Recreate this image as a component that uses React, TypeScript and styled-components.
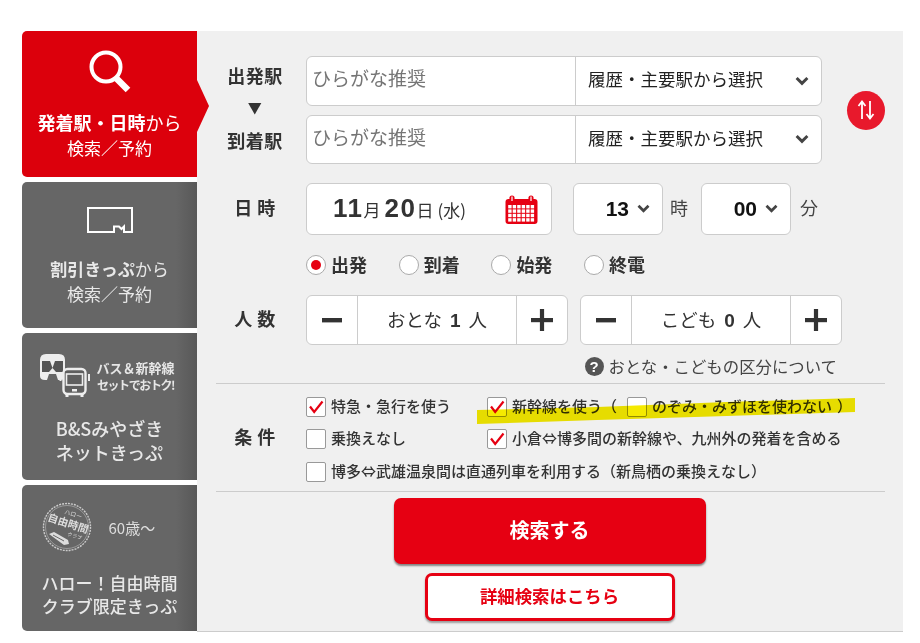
import React from 'react';
import styled, { createGlobalStyle } from 'styled-components';

const GlobalStyle = createGlobalStyle`
  html, body {
    margin: 0;
    padding: 0;
    background: #fff;
    font-family: "Noto Sans CJK JP", "Liberation Sans", sans-serif;
    color: #333;
  }
`;

const Page = styled.div`
  display: flex;
  width: 920px;
  height: 643px;
  box-sizing: border-box;
  padding: 31px 0 0 22px;
  overflow: hidden;
`;

const Sidebar = styled.nav`
  display: flex;
  flex-direction: column;
  gap: 5px;
  width: 175px;
  height: 600px;
  overflow: hidden;
`;

const Tab = styled.a<{ $active?: boolean; $top: number; $gap: number; $height: number; $line?: number }>`
  position: relative;
  display: flex;
  flex-direction: column;
  align-items: center;
  box-sizing: border-box;
  flex: none;
  height: ${p => p.$height}px;
  padding-top: ${p => p.$top}px;
  gap: ${p => p.$gap}px;
  border-radius: 5px 0 0 5px;
  color: #fff;
  background: ${p => (p.$active ? '#dc000c' : 'linear-gradient(to right, #666 88%, #585858)')};
  font-size: 17px;
  line-height: ${p => p.$line ?? 25}px;
  text-align: center;
`;

const TabText = styled.div<{ $muted?: boolean; $size?: number; $weight?: number }>`
  color: ${p => (p.$muted ? '#e8e8e8' : '#fff')};
  font-size: ${p => p.$size ?? 17}px;
  font-weight: ${p => p.$weight ?? 400};
  white-space: nowrap;

  b {
    font-weight: 700;
  }
`;

const ActiveColumn = styled.div`
  position: relative;
`;

const TabArrow = styled.div`
  position: absolute;
  left: 175px;
  top: 49px;
  width: 12px;
  height: 52px;
  background: #dc000c;
  clip-path: polygon(0 0, 100% 50%, 0 100%);
`;

const PromoRow = styled.div<{ $inset?: number }>`
  display: flex;
  align-items: center;
  box-sizing: border-box;
  width: 140px;
  padding-left: ${p => p.$inset ?? 0}px;
`;

const PromoText = styled.div`
  display: flex;
  flex-direction: column;
  align-items: center;
  margin-left: 5px;
  font-size: 13px;
  line-height: 17px;
  font-weight: 700;
  white-space: nowrap;
  color: #e6e6e6;
`;

const PromoLine = styled.span<{ $tight?: boolean }>`
  font-size: ${p => (p.$tight ? 12 : 13)}px;
  letter-spacing: ${p => (p.$tight ? -1.4 : 0)}px;
`;

const SeniorText = styled.div`
  margin-left: 17px;
  font-size: 15px;
  color: #ddd;
`;

const Panel = styled.main`
  box-sizing: border-box;
  width: 706px;
  height: 601px;
  padding: 25px 18px 10px 19px;
  background: #f0f0f0;
  border-bottom: 1px solid #ccc;
`;

const Row = styled.div<{ $top?: number }>`
  display: flex;
  align-items: center;
  margin-top: ${p => p.$top ?? 0}px;
`;

const RowLabel = styled.div`
  flex: none;
  box-sizing: border-box;
  width: 78px;
  margin-right: 12px;
  padding-bottom: 4px;
  font-size: 18px;
  font-weight: 700;
  text-align: center;
  letter-spacing: 0.5px;
  color: #333;
`;

const StationLabels = styled(RowLabel)`
  display: flex;
  flex-direction: column;
  align-items: center;
  padding-bottom: 6px;
  line-height: 28px;
`;

const StationArrow = styled.span`
  font-size: 14px;
  line-height: 37px;
  color: #333;
`;

const StationFields = styled.div`
  display: flex;
  flex-direction: column;
  gap: 9px;
  width: 516px;
`;

const Field = styled.div`
  display: flex;
  align-items: center;
  box-sizing: border-box;
  background: #fff;
  border: 1px solid #ccc;
  border-radius: 6px;
`;

const StationField = styled(Field)`
  height: 49.5px;
`;

const StationInput = styled.input`
  box-sizing: border-box;
  width: 269px;
  height: 100%;
  padding: 0 7px 6px 5px;
  border: 0;
  border-right: 1px solid #ccc;
  border-radius: 6px 0 0 6px;
  background: none;
  font: 400 19px "Noto Sans CJK JP", sans-serif;
  outline: none;

  ::placeholder {
    color: #8a8a8a;
    opacity: 1;
  }
`;

const StationSelect = styled.div`
  display: flex;
  flex: 1;
  align-items: center;
  justify-content: space-between;
  padding: 0 12px;
  font-size: 17.5px;
  color: #222;
  white-space: nowrap;
`;

const SelectText = styled.span`
  padding-bottom: 4px;
`;

const SwapButton = styled.button`
  display: flex;
  align-items: center;
  justify-content: center;
  flex: none;
  width: 38px;
  height: 39px;
  margin-left: 25px;
  padding: 0;
  border: 0;
  border-radius: 50%;
  background: #e8192c;
`;

const DateField = styled(Field)`
  justify-content: space-between;
  width: 246px;
  height: 52px;
  padding: 0 13px 0 26px;
  font-size: 17px;
  white-space: nowrap;
`;

const DateText = styled.span`
  padding-bottom: 2px;
`;

const DateNumber = styled.b`
  font-family: "Liberation Sans", sans-serif;
  font-size: 26px;
  font-weight: 700;
  letter-spacing: 1.5px;
`;

const Gap = styled.span`
  margin: 0 2px;
`;

const TimeField = styled(Field)<{ $left: number }>`
  justify-content: flex-end;
  gap: 8px;
  width: 90px;
  height: 52px;
  margin-left: ${p => p.$left}px;
  padding-right: 12px;
  font-family: "Liberation Sans", sans-serif;
  font-size: 21px;
  font-weight: 700;
  color: #111;
`;

const TimeUnit = styled.span<{ $left: number }>`
  margin-left: ${p => p.$left}px;
  padding-bottom: 4px;
  font-size: 18px;
  color: #444;
`;

const RadioGroup = styled.div`
  display: flex;
  margin: 20px 0 0 90px;
  height: 20px;
`;

const RadioItem = styled.label`
  display: flex;
  align-items: center;
  gap: 5px;
  box-sizing: border-box;
  width: 92.7px;
  height: 20px;
  padding-bottom: 2px;
  font-size: 18px;
  font-weight: 700;
  color: #333;
`;

const RadioCircle = styled.span<{ $on?: boolean }>`
  display: flex;
  align-items: center;
  justify-content: center;
  box-sizing: border-box;
  width: 20px;
  height: 20px;
  margin-bottom: -2px;
  border: 1px solid #aaa;
  border-radius: 50%;
  background: #fff;

  &::after {
    content: '';
    display: ${p => (p.$on ? 'block' : 'none')};
    width: 10px;
    height: 10px;
    border-radius: 50%;
    background: #e60012;
  }
`;

const Stepper = styled(Field)<{ $left?: number }>`
  width: 262px;
  height: 50px;
  margin-left: ${p => p.$left ?? 0}px;
`;

const StepButton = styled.div<{ $side: 'left' | 'right' }>`
  display: flex;
  align-items: center;
  justify-content: center;
  flex: none;
  width: 50px;
  height: 100%;
  border-${p => (p.$side === 'left' ? 'right' : 'left')}: 1px solid #ccc;
`;

const StepValue = styled.div`
  flex: 1;
  padding-bottom: 3px;
  font-size: 18.5px;
  text-align: center;
  white-space: nowrap;

  b {
    margin: 0 8px;
    font-family: "Liberation Sans", sans-serif;
    font-size: 19px;
    font-weight: 700;
  }
`;

const HelpRow = styled.div`
  display: flex;
  align-items: center;
  justify-content: flex-end;
  gap: 5px;
  height: 20px;
  margin: 11px 48px 0 0;
  font-size: 16.4px;
  color: #444;
  white-space: nowrap;
`;

const HelpIcon = styled.span`
  display: flex;
  align-items: center;
  justify-content: center;
  width: 19px;
  height: 19px;
  border-radius: 50%;
  background: #555;
  color: #fff;
  font-family: "Liberation Sans", sans-serif;
  font-size: 15px;
  font-weight: 700;
`;

const Conditions = styled.section`
  position: relative;
  display: flex;
  align-items: center;
  height: 107px;
  margin-top: 7px;
  border-top: 1px solid #ccc;
  border-bottom: 1px solid #ccc;
`;

const CheckGrid = styled.div`
  display: grid;
  grid-template-columns: 181px auto;
  row-gap: 12.5px;
  margin-top: 3px;
`;

const CheckItem = styled.label<{ $wide?: boolean }>`
  position: relative;
  z-index: 0;
  display: flex;
  align-items: center;
  gap: 5px;
  box-sizing: border-box;
  grid-column: ${p => (p.$wide ? '1 / span 2' : 'auto')};
  height: 20px;
  padding-bottom: 3px;
  font-size: 15px;
  font-weight: 500;
  color: #333;
  white-space: nowrap;
`;

const Paren = styled.span`
  margin: 0 -2px 0 0;
`;

const Box = styled.span<{ $left?: number }>`
  display: flex;
  align-items: center;
  justify-content: center;
  flex: none;
  box-sizing: border-box;
  width: 20px;
  height: 20px;
  margin: 0 0 -3px ${p => p.$left ?? 0}px;
  border: 1px solid #999;
  border-radius: 2px;
  background: #fff;
`;

const Highlight = styled.svg`
  position: absolute;
  left: 261px;
  top: 14px;
  mix-blend-mode: multiply;
  pointer-events: none;
  z-index: 1;
`;

const Actions = styled.div`
  display: flex;
  flex-direction: column;
  align-items: center;
  padding-right: 2px;
`;

const SearchButton = styled.button`
  width: 312px;
  height: 66px;
  margin-top: 6px;
  padding: 0 0 4px;
  border: 0;
  border-radius: 7px;
  background: #e60012;
  box-shadow: 0 2px 2px rgba(0, 0, 0, 0.45);
  color: #fff;
  font: 700 20px "Noto Sans CJK JP", sans-serif;
`;

const DetailButton = styled.button`
  box-sizing: border-box;
  width: 250px;
  height: 48px;
  margin-top: 9px;
  padding: 0 0 4px;
  border: 3px solid #e60012;
  border-radius: 7px;
  background: #fff;
  box-shadow: 0 2px 2px rgba(0, 0, 0, 0.35);
  color: #e60012;
  font: 700 17.4px "Noto Sans CJK JP", sans-serif;
`;

const Chevron = ({ size = 14 }: { size?: number }) => (
  <svg width={size} height={size * 0.7} viewBox="0 0 14 10" fill="none">
    <path d="M1.5 2 7 7.5 12.5 2" stroke="#444" strokeWidth="3" />
  </svg>
);

const Minus = () => (
  <svg width="22" height="22" viewBox="0 0 22 22">
    <rect x="1" y="9" width="20" height="4.4" fill="#333" />
  </svg>
);

const Plus = () => (
  <svg width="22" height="22" viewBox="0 0 22 22">
    <rect x="0" y="9" width="22" height="4.2" fill="#333" />
    <rect x="8.9" y="0" width="4.2" height="22" fill="#333" />
  </svg>
);

const Check = () => (
  <svg width="16" height="14" viewBox="0 0 16 14" fill="none">
    <path d="M2 6.5 6.2 12 14.5 1.5" stroke="#e60012" strokeWidth="2.2" />
  </svg>
);

const Calendar = () => (
  <svg width="33" height="29" viewBox="0 0 33 29">
    <rect x="0.5" y="4" width="32" height="25" rx="3" fill="#e60012" />
    {[0, 1, 2, 3].map(r =>
      [0, 1, 2, 3, 4, 5].map(c => (
        <rect key={`${r}-${c}`} x={3.2 + c * 4.5} y={10 + r * 4.4} width="3.4" height="3.4" fill="#fff" />
      )),
    )}
    <circle cx="7" cy="3" r="2.6" fill="#e60012" />
    <circle cx="26" cy="3" r="2.6" fill="#e60012" />
    <path d="M7 6V1.5M26 6V1.5" stroke="#fff" strokeWidth="1.2" />
  </svg>
);

const SwapIcon = () => (
  <svg width="18" height="22" viewBox="0 0 18 22" fill="none" stroke="#fff" strokeWidth="1.8">
    <path d="M5 20V2.5M1.5 7 5 2.5 8.5 7" />
    <path d="M13 2V19.5M9.5 15 13 19.5 16.5 15" />
  </svg>
);

const SearchIcon = () => (
  <svg width="42" height="43" viewBox="0 0 42 43" fill="none" stroke="#fff">
    <circle cx="17" cy="17" r="14.5" strokeWidth="4" />
    <path d="M27 28 39 40" strokeWidth="6.5" />
  </svg>
);

const TicketIcon = () => (
  <svg width="46" height="26" viewBox="0 0 46 26" fill="none" stroke="#fff" strokeWidth="2">
    <path d="M1 1H45V25H37V19.5L34.5 22 32 19.5H27V25H1Z" />
  </svg>
);

const TrainBusIcon = () => (
  <svg width="52" height="44" viewBox="0 0 52 44">
    <path d="M0 6Q0 0 6 0H19Q25 0 25 6V22Q25 26 20 26H5Q0 26 0 22Z" fill="#eee" />
    <path d="M2 7H10L12.5 14 9 18H2ZM23 7H15L12.5 14 16 18H23Z" fill="#555" />
    <path d="M7 26 9 20H16L18 26Z" fill="#666" />
    <rect x="23.5" y="15" width="22" height="25" rx="4" fill="#5f5f5f" stroke="#eee" strokeWidth="2.4" />
    <rect x="26.5" y="20" width="16" height="11" fill="none" stroke="#eee" strokeWidth="1.6" />
    <rect x="32" y="35" width="5" height="2.5" fill="#eee" />
    <path d="M27 39v4M42 39v4" stroke="#eee" strokeWidth="3" />
    <path d="M20.5 20v7M49 20v7" stroke="#eee" strokeWidth="2" />
  </svg>
);

const StampIcon = () => (
  <svg width="50" height="50" viewBox="0 0 50 50">
    <circle cx="25" cy="25" r="23.5" fill="none" stroke="#ccc" strokeWidth="1.4" strokeDasharray="2 1" />
    <circle cx="25" cy="25" r="21.5" fill="none" stroke="#bbb" strokeWidth="0.6" />
    <g transform="rotate(18 25 25)" fill="#ddd" fontFamily="Noto Sans CJK JP, sans-serif" textAnchor="middle">
      <text x="27" y="13" fontSize="6">ハロー</text>
      <text x="25" y="25" fontSize="10.5" fontWeight="700">自由時間</text>
      <text x="35" y="33" fontSize="5">クラブ</text>
    </g>
    <path d="M7 32 12 30 26 38 27 42 22 43Z" fill="#ddd" />
    <path d="M11 33 22 39" stroke="#666" strokeWidth="1" />
  </svg>
);

const App: React.FC = () => {
  return (
    <>
      <GlobalStyle />
      <Page>
        <ActiveColumn>
          <Sidebar>
            <Tab $active $height={146} $top={19} $gap={17}>
              <SearchIcon />
              <TabText>
                <TabText as="span" $size={18}>
                  <b>発着駅・日時</b>から
                </TabText>
                <br />
                検索／予約
              </TabText>
            </Tab>
            <Tab $height={146} $top={25} $gap={23}>
              <TicketIcon />
              <TabText $muted>
                <b>割引きっぷ</b>から
                <br />
                検索／予約
              </TabText>
            </Tab>
            <Tab $height={147} $top={21} $gap={18} $line={24}>
              <PromoRow>
                <TrainBusIcon />
                <PromoText>
                  <PromoLine>バス＆新幹線</PromoLine>
                  <PromoLine $tight>セットでおトク!</PromoLine>
                </PromoText>
              </PromoRow>
              <TabText $muted $size={18} $weight={500}>
                B&amp;Sみやざき
                <br />
                ネットきっぷ
              </TabText>
            </Tab>
            <Tab $height={146} $top={17} $gap={19} $line={23}>
              <PromoRow $inset={2}>
                <StampIcon />
                <SeniorText>60歳〜</SeniorText>
              </PromoRow>
              <TabText $muted $weight={500}>
                ハロー！自由時間
                <br />
                クラブ限定きっぷ
              </TabText>
            </Tab>
          </Sidebar>
          <TabArrow />
        </ActiveColumn>

        <Panel>
          <Row>
            <StationLabels>
              <span>出発駅</span>
              <StationArrow>▼</StationArrow>
              <span>到着駅</span>
            </StationLabels>
            <StationFields>
              <StationField>
                <StationInput placeholder="ひらがな推奨" />
                <StationSelect>
                  <SelectText>履歴・主要駅から選択</SelectText>
                  <Chevron />
                </StationSelect>
              </StationField>
              <StationField>
                <StationInput placeholder="ひらがな推奨" />
                <StationSelect>
                  <SelectText>履歴・主要駅から選択</SelectText>
                  <Chevron />
                </StationSelect>
              </StationField>
            </StationFields>
            <SwapButton aria-label="swap">
              <SwapIcon />
            </SwapButton>
          </Row>

          <Row $top={19}>
            <RowLabel>日 時</RowLabel>
            <DateField>
              <DateText>
                <DateNumber>11</DateNumber>月<Gap />
                <DateNumber>20</DateNumber>日<Gap />(水)
              </DateText>
              <Calendar />
            </DateField>
            <TimeField $left={21}>
              13
              <Chevron size={13} />
            </TimeField>
            <TimeUnit $left={7}>時</TimeUnit>
            <TimeField $left={13}>
              00
              <Chevron size={13} />
            </TimeField>
            <TimeUnit $left={9}>分</TimeUnit>
          </Row>

          <RadioGroup>
            <RadioItem>
              <RadioCircle $on />
              出発
            </RadioItem>
            <RadioItem>
              <RadioCircle />
              到着
            </RadioItem>
            <RadioItem>
              <RadioCircle />
              始発
            </RadioItem>
            <RadioItem>
              <RadioCircle />
              終電
            </RadioItem>
          </RadioGroup>

          <Row $top={20}>
            <RowLabel>人 数</RowLabel>
            <Stepper>
              <StepButton $side="left">
                <Minus />
              </StepButton>
              <StepValue>
                おとな<b>1</b>人
              </StepValue>
              <StepButton $side="right">
                <Plus />
              </StepButton>
            </Stepper>
            <Stepper $left={12}>
              <StepButton $side="left">
                <Minus />
              </StepButton>
              <StepValue>
                こども<b>0</b>人
              </StepValue>
              <StepButton $side="right">
                <Plus />
              </StepButton>
            </Stepper>
          </Row>

          <HelpRow>
            <HelpIcon>?</HelpIcon>
            おとな・こどもの区分について
          </HelpRow>

          <Conditions>
            <RowLabel>条 件</RowLabel>
            <CheckGrid>
              <CheckItem>
                <Box>
                  <Check />
                </Box>
                特急・急行を使う
              </CheckItem>
              <CheckItem>
                <Box>
                  <Check />
                </Box>
                新幹線を使う（
                <Box $left={5} />
                のぞみ・みずほを使わない
                <Paren>）</Paren>
              </CheckItem>
              <CheckItem>
                <Box />
                乗換えなし
              </CheckItem>
              <CheckItem>
                <Box>
                  <Check />
                </Box>
                小倉⇔博多間の新幹線や、九州外の発着を含める
              </CheckItem>
              <CheckItem $wide>
                <Box />
                博多⇔武雄温泉間は直通列車を利用する（新鳥栖の乗換えなし）
              </CheckItem>
            </CheckGrid>
            <Highlight width="378" height="26" viewBox="0 0 378 26">
              <path d="M0 12 120 9 250 4 378 0 378 14 250 18 120 22 0 26Z" fill="#f5ea00" />
            </Highlight>
          </Conditions>

          <Actions>
            <SearchButton>検索する</SearchButton>
            <DetailButton>詳細検索はこちら</DetailButton>
          </Actions>
        </Panel>
      </Page>
    </>
  );
};

export default App;
